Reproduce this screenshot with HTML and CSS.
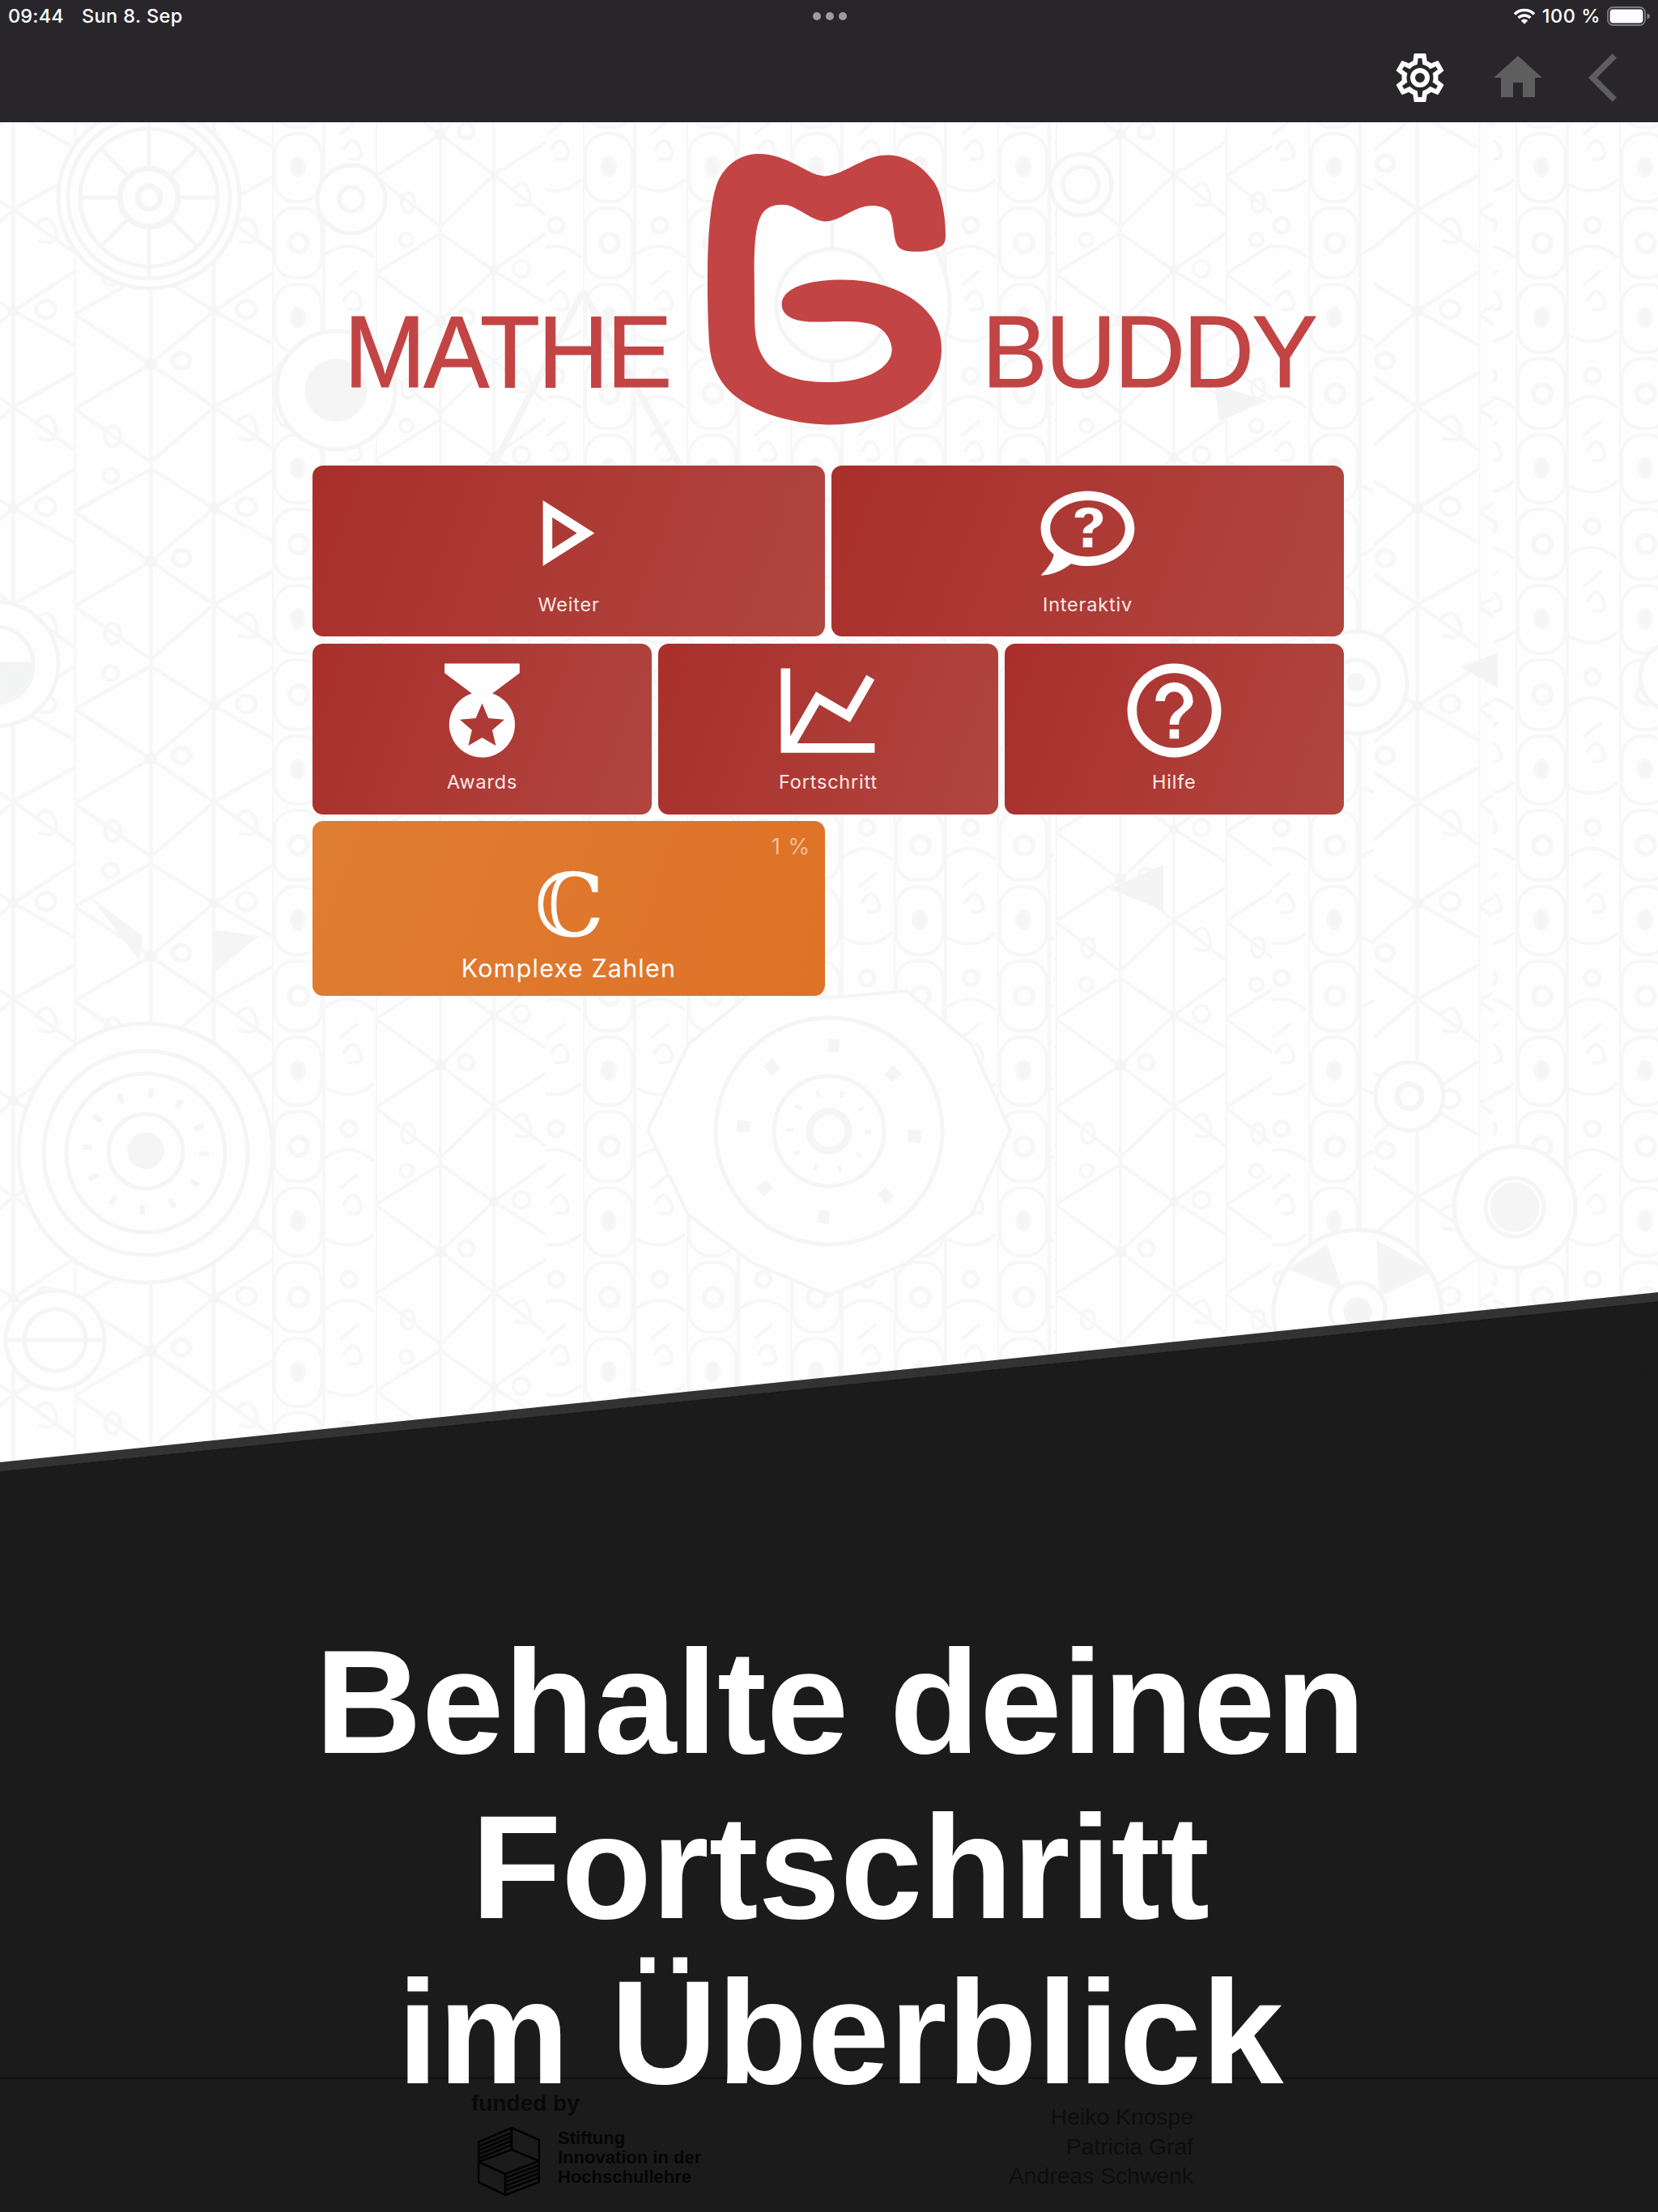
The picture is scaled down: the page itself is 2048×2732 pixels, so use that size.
FILE: index.html
```html
<!DOCTYPE html>
<html lang="de">
<head>
<meta charset="utf-8">
<title>Mathe Buddy</title>
<link rel="stylesheet" href="styles.css">
</head>
<body>
<div class="screen">
  <header class="topbar">
    <div class="status">
      <div class="status-left"><span class="time">09:44</span><span class="date">Sun 8. Sep</span></div>
      <div class="dots"><i></i><i></i><i></i></div>
      <div class="status-right">
        <svg class="wifi" viewBox="0 0 28 20"><path d="M2 7.5a17 17 0 0 1 24 0" fill="none" stroke="#fff" stroke-width="3.6"/><path d="M6.6 12a10.5 10.5 0 0 1 14.800 0" fill="none" stroke="#fff" stroke-width="3.6"/><path d="M14 19.800l-4.300-4.400a6 6 0 0 1 8.600 0z" fill="#fff"/></svg>
        <span class="percent">100 %</span>
        <svg class="battery" viewBox="0 0 54 24"><rect x="1" y="1" width="46" height="22" rx="6.500" fill="none" stroke="#7d7c80" stroke-width="1.800"/><rect x="3.600" y="3.600" width="40.800" height="16.800" rx="4" fill="#fff"/><path d="M49.500 8.500q3.500 1 3.500 3.500t-3.500 3.500z" fill="#7d7c80"/></svg>
      </div>
    </div>
    <nav class="tools">
      <svg class="tool tool-gear" viewBox="0 0 24 24"><path d="M12,8A4,4 0 0,1 16,12A4,4 0 0,1 12,16A4,4 0 0,1 8,12A4,4 0 0,1 12,8M12,10A2,2 0 0,0 10,12A2,2 0 0,0 12,14A2,2 0 0,0 14,12A2,2 0 0,0 12,10M10,22C9.750,22 9.540,21.820 9.500,21.580L9.130,18.930C8.500,18.680 7.960,18.340 7.440,17.940L4.950,18.950C4.730,19.030 4.460,18.950 4.340,18.730L2.340,15.270C2.210,15.050 2.270,14.780 2.460,14.630L4.570,12.970L4.500,12L4.570,11L2.460,9.370C2.270,9.220 2.210,8.950 2.340,8.730L4.340,5.270C4.460,5.050 4.730,4.960 4.950,5.050L7.440,6.050C7.960,5.660 8.500,5.320 9.130,5.070L9.500,2.420C9.540,2.180 9.750,2 10,2H14C14.250,2 14.460,2.180 14.500,2.420L14.870,5.070C15.500,5.320 16.040,5.660 16.560,6.050L19.050,5.050C19.270,4.960 19.540,5.050 19.660,5.270L21.660,8.730C21.790,8.950 21.730,9.220 21.540,9.370L19.430,11L19.500,12L19.430,13L21.540,14.630C21.730,14.780 21.790,15.050 21.660,15.270L19.660,18.730C19.540,18.950 19.270,19.040 19.050,18.950L16.560,17.950C16.040,18.340 15.500,18.680 14.870,18.930L14.500,21.580C14.460,21.820 14.250,22 14,22H10M11.250,4L10.880,6.610C9.680,6.860 8.620,7.500 7.850,8.390L5.440,7.350L4.690,8.650L6.800,10.200C6.400,11.370 6.400,12.640 6.800,13.800L4.680,15.360L5.430,16.660L7.860,15.620C8.630,16.500 9.680,17.140 10.870,17.380L11.240,20H12.760L13.130,17.390C14.320,17.140 15.370,16.500 16.140,15.620L18.570,16.660L19.320,15.360L17.200,13.810C17.600,12.640 17.600,11.370 17.200,10.200L19.310,8.650L18.560,7.350L16.150,8.390C15.380,7.500 14.320,6.860 13.120,6.620L12.750,4H11.250Z"/></svg>
      <svg class="tool tool-home" viewBox="0 0 24 24"><path d="M10,20V14H14V20H19V12H22L12,3L2,12H5V20H10Z"/></svg>
      <svg class="tool tool-back" viewBox="0 0 24 24"><path d="M11.670 3.870L9.900 2.100 0 12l9.900 9.900 1.770-1.770L3.540 12z"/></svg>
    </nav>
  </header>

  <main class="home">
    <svg class="doodles" viewBox="0 151 2048 2581" preserveAspectRatio="none">
      <defs>
        <pattern id="cells" width="128" height="186" patternUnits="userSpaceOnUse" x="336" y="1184">
          <g fill="none" stroke="#f7f7f7" stroke-width="4">
            <path d="M0 0V186M64 0V186"/>
            <rect x="3" y="3" width="58" height="86" rx="24"/><circle cx="33" cy="46" r="11" stroke-width="6"/>
            <rect x="3" y="97" width="58" height="84" rx="26"/><ellipse cx="32" cy="138" rx="8" ry="11" fill="#f5f5f5"/>
            <path d="M66 60q30 -22 60 4M66 160q34 18 60 -6"/><circle cx="95" cy="24" r="9" stroke-width="5"/>
            <path d="M88 118q12 -22 20 -4t-14 14M84 98l22 -18"/>
          </g>
        </pattern>
        <pattern id="mesh" width="210" height="230" patternUnits="userSpaceOnUse" x="464" y="1200">
          <g fill="none" stroke="#f7f7f7" stroke-width="4">
            <path d="M0 0V230M80 0V230M146 0V230"/>
            <path d="M0 58L80 8L146 54L210 94M0 58L80 116L146 54L210 8M0 168L80 116L146 166L210 126M0 168L80 230L146 166L210 216"/>
            <circle cx="38" cy="16" r="8"/><circle cx="112" cy="112" r="9" stroke-width="5"/><circle cx="180" cy="52" r="10"/><ellipse cx="40" cy="200" rx="8" ry="12"/><path d="M168 186q16 -20 22 2t-18 14"/>
          </g>
          <circle cx="80" cy="116" r="7" fill="#f5f5f5"/><circle cx="146" cy="54" r="6" fill="#f5f5f5"/>
        </pattern>
        <pattern id="mesh-wide" href="#mesh" patternTransform="translate(40 30) scale(1.18 1.06)"/>
      </defs>
      <rect x="336" y="151" width="128" height="1700" fill="url(#cells)"/>
      <rect x="464" y="151" width="210" height="1700" fill="url(#mesh)"/>
      <rect x="674" y="151" width="174" height="1700" fill="url(#cells)"/>
      <rect x="0" y="151" width="336" height="1700" fill="url(#mesh-wide)"/>
      <rect x="848" y="151" width="454" height="1700" fill="url(#cells)"/>
      <rect x="1302" y="151" width="269" height="1600" fill="url(#mesh)"/>
      <rect x="1571" y="151" width="126" height="1600" fill="url(#cells)"/>
      <rect x="1697" y="151" width="147" height="1600" fill="url(#mesh-wide)"/>
      <rect x="1844" y="151" width="204" height="1600" fill="url(#cells)"/>

      <g fill="#fefefe" stroke="#f5f5f5" stroke-width="5">
        <circle cx="184" cy="244" r="112"/><circle cx="184" cy="244" r="100"/><circle cx="184" cy="244" r="85"/><path d="M184 144V344M99 244H269M125 184L243 304M243 184L125 304"/><circle cx="184" cy="244" r="36" stroke-width="7"/><circle cx="184" cy="244" r="14" stroke-width="7"/>
        <ellipse cx="180" cy="1424" rx="157" ry="160"/><circle cx="180" cy="1424" r="126"/><circle cx="180" cy="1424" r="98"/><circle cx="180" cy="1422" r="46"/>
        <circle cx="180" cy="1422" r="72" fill="none" stroke-width="12" stroke-dasharray="6 32"/><circle cx="180" cy="1421" r="20" fill="#f5f5f5"/>
        <path d="M1024 1232L1120 1224L1200 1290L1248 1396L1200 1500L1120 1560L1024 1600L930 1560L850 1500L800 1396L850 1290L930 1224Z" stroke-width="4"/>
        <circle cx="1024" cy="1397" r="140"/><circle cx="1024" cy="1397" r="106" fill="none" stroke-width="16" stroke-dasharray="14 69"/><circle cx="1024" cy="1397" r="68"/><circle cx="1024" cy="1397" r="48" fill="none" stroke-width="8" stroke-dasharray="4 26"/><circle cx="1024" cy="1397" r="24" stroke-width="9"/>
        <circle cx="-5" cy="820" r="77"/><circle cx="-5" cy="820" r="46"/><path d="M0 820H41A46 46 0 0 1 0 868z" fill="#f3f4f4"/>
        <circle cx="1871" cy="1491" r="75"/><circle cx="1871" cy="1491" r="36"/><circle cx="1871" cy="1491" r="28" fill="#f5f5f5"/>
        <circle cx="1677" cy="1623" r="104"/><path d="M1595 1567L1638 1541L1655 1590zM1703 1536L1764 1570L1706 1598z" fill="#f4f4f4"/><circle cx="1677" cy="1618" r="34"/><circle cx="1677" cy="1620" r="15" fill="#f4f4f4"/>
        <circle cx="415" cy="482" r="73"/><circle cx="415" cy="482" r="36" fill="#f5f5f5"/>
        <circle cx="68" cy="1655" r="61"/><circle cx="68" cy="1655" r="38"/><path d="M10 1655H126"/>
        <circle cx="434" cy="246" r="42"/><circle cx="434" cy="246" r="15"/>
        <circle cx="1741" cy="1354" r="42"/><circle cx="1741" cy="1354" r="15" stroke-width="7"/>
        <circle cx="1675" cy="843" r="63"/><circle cx="1675" cy="843" r="28"/><circle cx="1675" cy="843" r="9" fill="#f5f5f5"/>
        <circle cx="1335" cy="228" r="38"/><circle cx="1335" cy="228" r="22"/>
        <circle cx="1028" cy="377" r="145"/><circle cx="1028" cy="377" r="69"/><path d="M1028 210V308M1028 446V520"/>
        <circle cx="2068" cy="836" r="42"/>
        <path d="M720 360L610 575M720 360L840 575" stroke-width="8"/>
        <path d="M1370 1098L1437 1068V1124zM1500 475L1565 495L1506 520zM1804 824L1850 806V850z" fill="#f4f4f4" stroke="none"/>
        <path d="M112 1108L176 1156L172 1186zM262 1148L320 1156L266 1200z" fill="#f5f5f5" stroke="none"/>
      </g>
    </svg>

    <div class="brand">
      <span class="brand-word brand-left">MATHE</span>
      <svg class="brand-mark" viewBox="103 61 882 1003"><path d="M290 61C345 61 390 80 435 103C475 124 505 143 539 143C573 143 620 117 660 97C698 78 728 65 771 65C840 65 905 110 942 165C972 208 985 300 985 362C985 388 978 398 966 404C940 417 910 423 878 423C850 423 822 420 809 404C797 389 795 362 790 325C785 285 780 272 762 264C745 255 728 253 713 253C680 253 650 268 622 282C590 299 565 311 539 311C510 311 482 293 455 277C425 259 405 249 378 249C350 249 320 258 304 285C280 325 276 400 276 500C277 580 277 650 278 700C281 750 290 790 318 828C358 884 450 907 549 907C650 907 722 882 760 843C778 824 786 806 786 785C784 750 762 716 730 700C692 680 620 681 545 683C480 685 440 682 412 668C390 657 378 640 378 618C378 560 470 527 602 527C720 527 830 560 902 630C950 677 970 725 970 785C970 860 935 922 875 968C800 1028 690 1064 560 1064C420 1064 270 1020 190 945C140 897 112 835 108 745C104 660 102 580 103 490C104 380 112 250 135 180C158 110 220 61 290 61Z"/></svg>
      <span class="brand-word brand-right">BUDDY</span>
    </div>

    <section class="tiles">
      <div class="row">
        <a class="tile"><svg class="icon" viewBox="0 0 24 24"><path d="M8.500,8.640L13.770,12L8.500,15.360V8.640M6.500,5V19L17.500,12"/></svg><span class="label">Weiter</span></a>
        <a class="tile"><svg class="icon" viewBox="0 0 24 24"><path d="M12 3C6.500 3 2 6.580 2 11C2.050 13.150 3.060 15.170 4.750 16.500C4.750 17.100 4.330 18.670 2 21C4.370 20.890 6.640 20 8.470 18.500C9.610 18.830 10.810 19 12 19C17.500 19 22 15.420 22 11S17.500 3 12 3M12 17C7.580 17 4 14.310 4 11S7.580 5 12 5 20 7.690 20 11 16.420 17 12 17"/><path transform="translate(0 1)" d="M12.190 5.500C11.300 5.500 10.590 5.680 10.050 6.040C9.500 6.400 9.220 7 9.270 7.690H11.240C11.240 7.410 11.340 7.200 11.500 7.060C11.700 6.920 11.920 6.850 12.190 6.850C12.500 6.850 12.770 6.930 12.950 7.110C13.130 7.280 13.220 7.500 13.220 7.800C13.220 8.080 13.140 8.330 13 8.540C12.830 8.760 12.620 8.940 12.360 9.080C11.840 9.400 11.500 9.680 11.290 9.920C11.100 10.160 11 10.500 11 11H13C13 10.720 13.050 10.500 13.140 10.320C13.230 10.150 13.400 10 13.660 9.850C14.120 9.640 14.500 9.360 14.790 9C15.080 8.630 15.230 8.240 15.230 7.800C15.230 7.100 14.960 6.540 14.420 6.120C13.880 5.710 13.130 5.500 12.190 5.500M11 12V14H13V12H11Z"/></svg><span class="label">Interaktiv</span></a>
      </div>
      <div class="row">
        <a class="tile"><svg class="icon" viewBox="0 0 24 24"><path d="M20,2H4V4L9.810,8.360C6.140,9.570 4.140,13.530 5.350,17.200C6.560,20.870 10.500,22.870 14.190,21.660C17.860,20.450 19.860,16.500 18.650,12.820C17.950,10.710 16.300,9.050 14.190,8.360L20,4V2M14.940,19.500L12,17.780L9.060,19.500L9.840,16.170L7.250,13.930L10.660,13.640L12,10.500L13.340,13.640L16.750,13.930L14.160,16.170L14.940,19.500Z"/></svg><span class="label">Awards</span></a>
        <a class="tile"><svg class="icon" viewBox="0 0 24 24"><path d="M16,11.780L20.240,4.450L21.970,5.450L16.740,14.500L10.230,10.750L5.460,19H22V21H2V3H4V17.540L9.500,8L16,11.780Z"/></svg><span class="label">Fortschritt</span></a>
        <a class="tile"><svg class="icon" viewBox="0 0 24 24"><path d="M11,18H13V16H11V18M12,2A10,10 0 0,0 2,12A10,10 0 0,0 12,22A10,10 0 0,0 22,12A10,10 0 0,0 12,2M12,20C7.590,20 4,16.410 4,12C4,7.590 7.590,4 12,4C16.410,4 20,7.590 20,12C20,16.410 16.410,20 12,20M12,6A4,4 0 0,0 8,10H10A2,2 0 0,1 12,8A2,2 0 0,1 14,10C14,12 11,11.750 11,15H13C13,12.250 16,12 16,10A4,4 0 0,0 12,6Z"/></svg><span class="label">Hilfe</span></a>
      </div>
      <div class="row row-half">
        <a class="tile tile-course"><span class="progress">1 %</span><span class="symbol">ℂ</span><span class="course">Komplexe Zahlen</span></a>
      </div>
    </section>

    <footer class="credits">
      <div class="funding">
        <div class="funded">funded by</div>
        <div class="sponsor">
          <svg class="sponsor-mark" viewBox="0 0 77 86"><g fill="none" stroke="#111" stroke-width="2.600"><path d="M42 1L1 19V68L34 84L76 68V16L42 1V28L1 43L34 58L76 42L42 28M34 58V84"/><path d="M1 24L42 7M1 29L42 12M1 34L42 17M1 39L42 22M34 63L76 47M34 68L76 52M34 73L76 57M34 78L76 62"/></g></svg>
          <div class="sponsor-name">Stiftung<br>Innovation in der<br>Hochschullehre</div>
        </div>
      </div>
      <div class="authors">Heiko Knospe<br>Patricia Graf<br>Andreas Schwenk</div>
    </footer>
  </main>

  <div class="shade shade-edge"></div>
  <div class="shade shade-body"></div>
  <h1 class="headline">Behalte deinen<br>Fortschritt<br>im Überblick</h1>
</div>
</body>
</html>
```
FILE: styles.css
```css
* { box-sizing: border-box; }

body {
  margin: 0;
  background: #fefefe;
  font-family: Inter, "Liberation Sans", sans-serif;
}

.screen {
  position: relative;
  width: 2048px;
  height: 2732px;
  display: flex;
  flex-direction: column;
  overflow: hidden;
}

/* Top bar */
.topbar {
  height: 151px;
  background: #28262b;
  color: #fff;
}

.status {
  height: 40px;
  display: grid;
  grid-template-columns: 1fr auto 1fr;
  align-items: center;
  padding: 0 9px 0 10px;
  font-size: 23.5px;
  font-weight: 500;
  line-height: 38px;
}

.status-left { display: flex; gap: 22px; }
.time { letter-spacing: 0.2px; }
.date { letter-spacing: 0.4px; }
.dots { display: flex; gap: 6px; }
.dots i { width: 10px; height: 10px; border-radius: 50%; background: #9c9b9e; }

.status-right {
  display: flex;
  justify-content: flex-end;
  align-items: center;
}
.wifi { width: 28px; height: 20px; margin-right: 8px; }
.percent { margin-right: 8px; letter-spacing: 0.5px; }
.battery { width: 54px; height: 24px; }

.tools {
  display: flex;
  justify-content: flex-end;
  padding: 20px 14px 0 0;
}
.tool { width: 72px; height: 72px; fill: #5e5e5e; }
.tool-gear { fill: #fff; margin-right: 49px; }
.tool-home { margin-right: 51px; }

/* Home */
.home {
  position: relative;
  flex: 1;
  display: flex;
  flex-direction: column;
}

.doodles {
  position: absolute;
  inset: 0;
  width: 100%;
  height: 100%;
}

.brand {
  position: relative;
  display: flex;
  height: 424px;
  padding: 39px 0 0 425px;
  color: #c24444;
}
.brand-word {
  font-family: "Liberation Sans", Arial, sans-serif;
  font-size: 121px;
  line-height: 144px;
  letter-spacing: -2.3px;
  padding-top: 174px;
  -webkit-text-stroke: 1.2px #c24444;
  transform: scaleY(1.04);
  transform-origin: 0 289px;
}
.brand-left { width: 449px; }
.brand-mark { width: 294px; height: 334.500px; fill: #c24444; }
.brand-right { margin-left: 45px; }

.tiles {
  position: relative;
  width: 1274px;
  margin: 0 auto;
  left: -1px;
  display: flex;
  flex-direction: column;
  gap: 8.500px;
}
.row { display: flex; gap: 8px; }
.row-half { width: 633px; }

.tile {
  flex: 1 1 0;
  height: 211px;
  padding-top: 13.500px;
  border-radius: 13px;
  background: linear-gradient(110deg, #a92f2b, #b14540);
  display: flex;
  flex-direction: column;
  align-items: center;
}
.icon { width: 139px; height: 139px; fill: #fff; }
.label {
  margin-top: 4px;
  color: #fbe9e8;
  font-size: 23.5px;
  line-height: 30px;
  letter-spacing: 0.8px;
}

.tile-course {
  height: 215.500px;
  padding: 13px 18px 0;
  background: linear-gradient(110deg, #df7d33, #de7226);
  color: #fff;
}
.progress {
  align-self: flex-end;
  color: #f0c09b;
  font-size: 27.5px;
  line-height: 36px;
  letter-spacing: 0.8px;
}
.symbol {
  font-family: "DejaVu Math TeX Gyre", "DejaVu Serif", serif;
  font-size: 108px;
  line-height: 108px;
  height: 108px;
  padding-top: 7px;
}
.course {
  margin-top: 5px;
  font-size: 30.5px;
  line-height: 40px;
  letter-spacing: 1.200px;
}

/* Footer */
.credits {
  position: relative;
  margin-top: auto;
  height: 167px;
  border-top: 3px solid #aaa;
  background: #fff;
  display: flex;
  justify-content: space-between;
  padding: 14px 574px 0 582px;
  font-family: "Liberation Sans", Arial, sans-serif;
}
.funded { font-size: 28px; line-height: 32px; font-weight: 700; color: #555; }
.sponsor { display: flex; gap: 22px; padding: 13px 0 0 8px; }
.sponsor-mark { width: 77px; height: 86px; }
.sponsor-name { font-size: 22px; line-height: 24px; font-weight: 700; color: #333; padding-top: 2px; }
.authors { font-size: 28.3px; line-height: 36.500px; color: #777; text-align: right; padding-top: 14px; }

/* Slanted promo panel drawn over the screen */
.shade { position: absolute; inset: 0; }
.shade-edge {
  background: rgba(0, 0, 0, 0.8);
  clip-path: polygon(0 1806px, 100% 1596px, 100% 1608px, 0 1818px);
}
.shade-body {
  background: rgba(0, 0, 0, 0.896);
  clip-path: polygon(0 1817.5px, 100% 1607.5px, 100% 100%, 0 100%);
}
.headline {
  position: absolute;
  top: 2000px;
  left: 0;
  width: 2076px;
  margin: 0;
  color: #fff;
  font: 700 182.4px/204px "Liberation Sans", Arial, sans-serif;
  text-align: center;
}
```
